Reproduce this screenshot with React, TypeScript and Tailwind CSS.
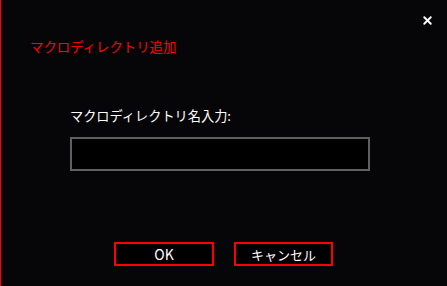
import { X } from "lucide-react";

export default function App() {
  return (
    <div
      className="relative flex h-[286px] w-[447px] flex-col border-l border-[#ff0000] bg-[#060608] text-white"
      style={{ fontFamily: '"Noto Sans CJK JP", "Noto Sans", sans-serif' }}
    >
      {/* close */}
      <button className="absolute right-[13px] top-[14px] flex h-[13px] w-[13px] items-center justify-center text-white">
        <X className="h-[13px] w-[13px]" strokeWidth={3.5} />
      </button>

      <div className="pl-[29px] pt-[38px] text-[13.4px] leading-[16px] text-[#ff0000]">
        マクロディレクトリ追加
      </div>

      <div className="mt-[54px] pl-[69px] text-[13.2px] leading-[16px] text-white">
        マクロディレクトリ名入力:
      </div>

      <input
        type="text"
        className="ml-[69px] mt-[13px] h-[34px] w-[300px] border-2 border-[#5f5f5f] bg-black px-2 text-[13px] text-white outline-none"
      />

      <div className="ml-[113px] mt-[71px] flex gap-[20px]">
        <button className="flex h-[24px] w-[100px] items-center justify-center border-2 border-[#ff0000] bg-black text-[14px] leading-none text-white">
          OK
        </button>
        <button className="flex h-[24px] w-[99px] items-center justify-center border-2 border-[#ff0000] bg-black text-[13px] leading-none text-white">
          キャンセル
        </button>
      </div>
    </div>
  );
}
